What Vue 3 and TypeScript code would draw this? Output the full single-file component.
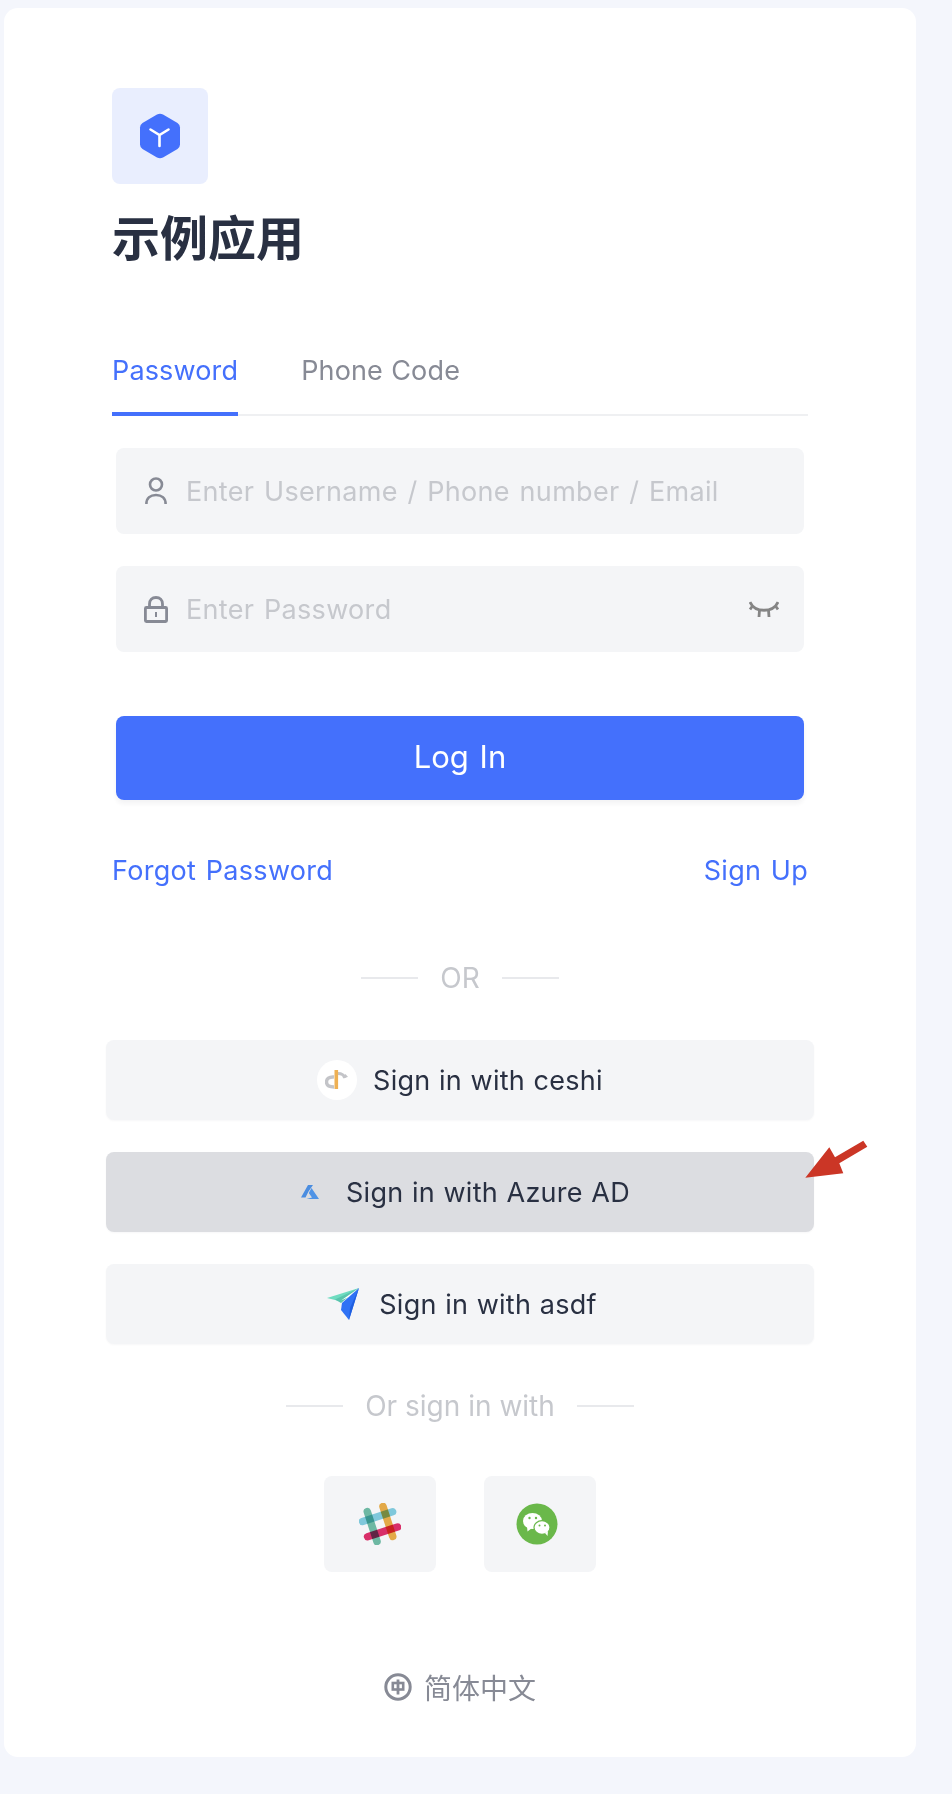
<script setup lang="ts">
const providers = [
  { id: 'ceshi', label: 'Sign in with ceshi', hover: false },
  { id: 'azure', label: 'Sign in with Azure AD', hover: true },
  { id: 'asdf', label: 'Sign in with asdf', hover: false },
]
</script>

<template>
  <div class="page">
    <main class="card">
      <div class="logo">
        <svg width="42" height="46" viewBox="0 0 42 46">
          <path d="M18 1.6 L3.5 10 Q1 11.5 1 14.5 V31.5 Q1 34.5 3.5 36 L18 44.4 Q21 46 24 44.4 L38.5 36 Q41 34.5 41 31.5 V14.5 Q41 11.5 38.5 10 L24 1.6 Q21 0 18 1.6 Z" fill="#4470fc" />
          <path d="M11.5 16.5 L20.5 22 L29.5 16.5 M20.5 22 V33" fill="none" stroke="#fff" stroke-width="2.6" stroke-linecap="round" />
        </svg>
      </div>
      <h1 class="title">示例应用</h1>

      <div class="tabs">
        <div class="tab active">Password</div>
        <div class="tab">Phone Code</div>
      </div>

      <div class="field first">
        <svg class="field-icon user" width="22" height="27" viewBox="0 0 22 27" fill="none" stroke="#878a95" stroke-width="2.6">
          <circle cx="11" cy="7.5" r="6" />
          <path d="M1.4 27 C1.4 21 5.5 18 11 18 C16.5 18 20.6 21 20.6 27" />
        </svg>
        <input class="input" type="text" placeholder="Enter Username / Phone number / Email" />
      </div>
      <div class="field">
        <svg class="field-icon lock" width="24" height="27" viewBox="0 0 24 27" fill="none" stroke="#878a95" stroke-width="2.8">
          <path d="M5.5 12 V8 C5.5 4 8 1.5 12 1.5 C16 1.5 18.5 4 18.5 8 V12" />
          <rect x="1.4" y="11.5" width="21.2" height="14" rx="1" />
          <rect x="11" y="16" width="2" height="5" fill="#878a95" stroke="none" />
        </svg>
        <input class="input" type="password" placeholder="Enter Password" />
        <svg class="eye" width="30" height="17" viewBox="0 0 30 17" fill="none" stroke="#858585" stroke-width="2.8">
          <path d="M1 1 C6 12 24 12 29 1" />
          <path d="M3.5 5 L1 8.5 M10.5 9 L10 16 M19.5 9 L20 16 M26.5 5 L29 8.5" />
        </svg>
      </div>

      <button class="login" type="button">Log In</button>

      <div class="links">
        <a class="link">Forgot Password</a>
        <a class="link">Sign Up</a>
      </div>

      <div class="divider or"><span class="rule"></span><span>OR</span><span class="rule"></span></div>

      <div class="providers">
        <button v-for="p in providers" :key="p.id" class="provider" :class="{ hover: p.hover }" type="button">
          <span class="provider-icon" :class="{ round: p.id === 'ceshi' }">
            <svg v-if="p.id === 'ceshi'" width="24" height="20" viewBox="0 0 24 20" fill="none">
              <path d="M9 7 C4 6.5 1.5 9 1.5 12 C1.5 15 4 17 9 17" stroke="#c3c4c8" stroke-width="3.4" />
              <path d="M13 3.5 C17 3.5 19 5 20 8" stroke="#c3c4c8" stroke-width="3" />
              <path d="M17.5 8 L23 7 L20.5 4 Z" fill="#c3c4c8" />
              <rect x="9.5" y="0" width="3.6" height="19" fill="#eeb053" />
            </svg>
            <svg v-else-if="p.id === 'azure'" width="18" height="14" viewBox="0 0 18 14">
              <path d="M7 0 L12 0 L7.5 6.5 L4.5 12.5 L0 12.5 Z" fill="#4b8de0" />
              <path d="M10.5 3 L18 14 L5.5 14 L11 12.5 L7.8 8 Z" fill="#4f93e6" />
            </svg>
            <svg v-else width="33" height="32" viewBox="0 0 33 32">
              <path d="M0 10 L32 0 L12 13 Z" fill="#6edcc0" />
              <path d="M8 11.5 L32 0 L14 15 Z" fill="#59c4ad" />
              <path d="M14 12.5 L32 0 L22 9 Z" fill="#fff" />
              <path d="M15 15 L32 0 L22 32 L14 22 Z" fill="#2f72f5" />
              <path d="M22 32 L32 0 L23 20 Z" fill="#1f5fe0" />
            </svg>
          </span>
          <span>{{ p.label }}</span>
        </button>
      </div>

      <div class="divider alt"><span class="rule"></span><span>Or sign in with</span><span class="rule"></span></div>

      <div class="socials">
        <button class="social" type="button" aria-label="Slack">
          <svg class="slack" width="42" height="42" viewBox="0 0 42 42">
            <g transform="rotate(-18 21 21)">
              <rect x="9" y="1.5" width="7.5" height="39" rx="3.75" fill="#72c0a8" />
              <rect x="25.5" y="1.5" width="7.5" height="39" rx="3.75" fill="#eeb04a" />
              <rect x="1.5" y="9.5" width="39" height="7.5" rx="3.75" fill="#85d0e2" />
              <rect x="1.5" y="25.5" width="39" height="7.5" rx="3.75" fill="#e2316c" />
            </g>
          </svg>
        </button>
        <button class="social" type="button" aria-label="WeChat">
          <svg class="wechat" width="42" height="42" viewBox="0 0 42 42">
            <circle cx="21" cy="21" r="20.5" fill="#6ab84a" />
            <ellipse cx="16.5" cy="18" rx="9.5" ry="8" fill="#fff" />
            <path d="M11 23 L11.5 28.5 L16 25 Z" fill="#fff" />
            <ellipse cx="26" cy="24.5" rx="8" ry="6.8" fill="#fff" stroke="#6ab84a" stroke-width="1.2" />
            <path d="M29 30 L31.5 33 L32 28 Z" fill="#fff" />
            <circle cx="13.5" cy="15" r="1.2" fill="#6ab84a" />
            <circle cx="20" cy="15" r="1.2" fill="#6ab84a" />
            <circle cx="23.5" cy="22.5" r="1" fill="#6ab84a" />
            <circle cx="29" cy="22.5" r="1" fill="#6ab84a" />
          </svg>
        </button>
      </div>

      <div class="lang">
        <svg width="28" height="28" viewBox="0 0 28 28" fill="none" stroke="#878a95">
          <circle cx="14" cy="14" r="12.2" stroke-width="3" />
          <rect x="8.8" y="10" width="10.4" height="6.5" stroke-width="2.6" />
          <path d="M14 6.5 V21.5" stroke-width="2.8" />
        </svg>
        <span>简体中文</span>
      </div>
    </main>

    <svg class="annotation" width="64" height="40" viewBox="0 0 64 40">
      <path d="M0.3 37.7 L24.3 7.3 L30 17.3 L58.3 0.7 L62.3 6.7 L34.3 23.3 L38.3 33.3 Z" fill="#cb3626" />
    </svg>
  </div>
</template>

<style scoped>
.page {
  position: relative;
  box-sizing: border-box;
  width: 952px;
  height: 1794px;
  padding: 8px 0 0 4px;
  background: #f4f6fc;
  font-family: Inter, "Noto Sans CJK SC", sans-serif;
  color: #293042;
  overflow: hidden;
}
.card {
  box-sizing: border-box;
  width: 912px;
  height: 1749px;
  padding: 80px 108px 0;
  background: #fff;
  border-radius: 14px;
}
.logo {
  display: flex;
  align-items: center;
  justify-content: center;
  width: 96px;
  height: 96px;
  border-radius: 8px;
  background: #e9eefe;
}
.title {
  margin: 19px 0 84px;
  font-family: "Noto Sans CJK SC", sans-serif;
  font-size: 48px;
  font-weight: 700;
  line-height: 64px;
  color: #293042;
}
.tabs {
  display: flex;
  gap: 63px;
  border-bottom: 2px solid #eff0f2;
}
.tab {
  position: relative;
  padding-top: 0;
  padding-bottom: 23px;
  font-size: 27px;
  line-height: 40px;
  letter-spacing: 0.15px;
  word-spacing: 0.5px;
  color: #878a95;
}
.tab.active {
  color: #4470fc;
}
.tab.active::after {
  content: "";
  position: absolute;
  left: 0;
  right: 0;
  bottom: -2px;
  height: 4px;
  background: #4470fc;
}
.field {
  position: relative;
  display: flex;
  align-items: center;
  height: 86px;
  margin: 32px 4px 0;
  border-radius: 8px;
  background: #f4f5f7;
}
.field-icon {
  position: absolute;
  top: 29px;
}
.field-icon.user { left: 29px; }
.field-icon.lock { left: 28px; top: 30px; }
.eye {
  position: absolute;
  right: 25px;
  top: 35px;
}
.input {
  flex: 1;
  min-width: 0;
  height: 100%;
  padding: 0 0 0 70px;
  border: 0;
  outline: 0;
  background: transparent;
  font: 27px Inter, sans-serif;
  letter-spacing: 0.32px;
  word-spacing: 1.8px;
  color: #293042;
}
.input::placeholder {
  color: #c6c8cd;
  opacity: 1;
}
.login {
  display: block;
  width: 688px;
  height: 84px;
  margin: 64px 4px 0;
  padding: 0 0 3px;
  border: 0;
  border-radius: 8px;
  background: #4470fc;
  font: 31px Inter, sans-serif;
  word-spacing: 2px;
  color: #fff;
  box-shadow: 0 4px 4px rgba(41, 48, 66, 0.05);
}
.links {
  display: flex;
  justify-content: space-between;
  margin-top: 51px;
  font-size: 27px;
  line-height: 40px;
  letter-spacing: 0.32px;
  word-spacing: 1.5px;
  color: #4470fc;
}
.divider {
  display: flex;
  align-items: center;
  justify-content: center;
  gap: 22px;
  font-size: 28px;
  line-height: 40px;
  color: #c6c8cd;
}
.divider.or { margin-top: 67px; }
.divider.alt { margin-top: 42px; }
.rule {
  width: 57px;
  height: 2px;
  background: #e8e9ec;
}
.providers {
  display: flex;
  flex-direction: column;
  gap: 32px;
  margin: 42px -6px 0;
}
.provider {
  display: flex;
  align-items: center;
  justify-content: center;
  gap: 16px;
  height: 80px;
  border: 0;
  border-radius: 8px;
  background: #f4f5f7;
  font: 27px Inter, sans-serif;
  letter-spacing: 0.3px;
  word-spacing: 0.5px;
  color: #293042;
  box-shadow: 0 1px 2px rgba(41, 48, 66, 0.04);
}
.provider.hover {
  background: #dcdde1;
}
.provider-icon {
  display: flex;
  align-items: center;
  justify-content: center;
  width: 40px;
  height: 40px;
  border-radius: 50%;
}
.provider-icon.round {
  background: #fff;
}
.socials {
  display: flex;
  justify-content: center;
  gap: 48px;
  margin-top: 50px;
}
.social {
  display: flex;
  align-items: center;
  justify-content: center;
  width: 112px;
  height: 96px;
  padding: 0;
  border: 0;
  border-radius: 8px;
  background: #f4f5f7;
}
.slack rect {
  mix-blend-mode: multiply;
}
.wechat {
  margin: 0 6px 0 0;
}
.lang {
  display: flex;
  align-items: center;
  justify-content: center;
  gap: 12px;
  margin-top: 95px;
  font-family: "Noto Sans CJK SC", sans-serif;
  font-size: 28px;
  line-height: 40px;
  color: #878a95;
}
.annotation {
  position: absolute;
  left: 805px;
  top: 1140px;
}
</style>
